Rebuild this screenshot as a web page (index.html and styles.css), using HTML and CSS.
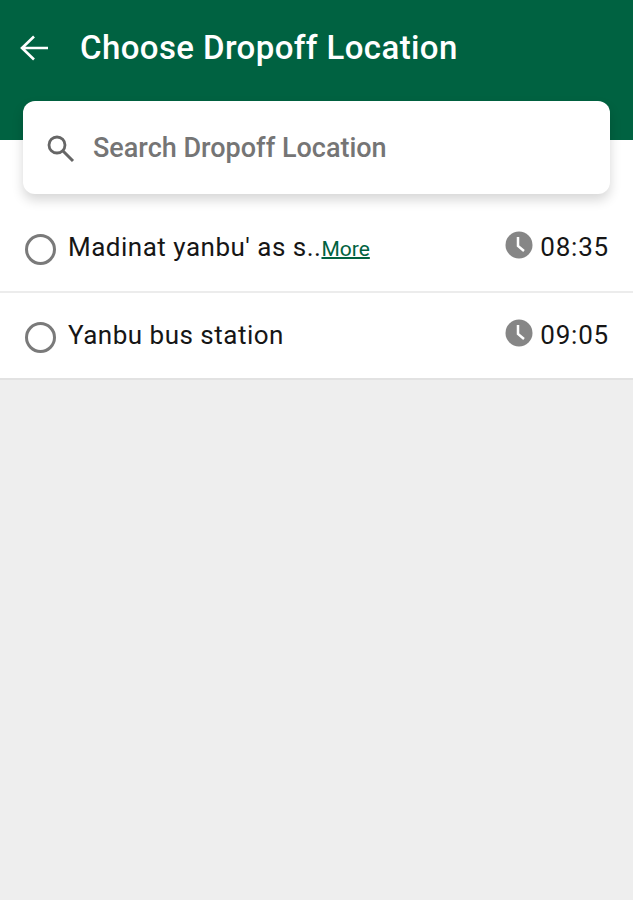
FILE: index.html
```html
<!DOCTYPE html>
<html lang="en">
<head>
    <meta charset="UTF-8">
    <meta name="viewport" content="width=device-width, initial-scale=1.0">
    <title>Choose Dropoff Location</title>
    <link rel="stylesheet" href="styles.css">
</head>
<body>
    <header class="header">
        <svg class="back-icon" width="32" height="32" viewBox="0 0 32 32">
            <path d="M30 16H4M16 4.500L4 16l12 11.500" fill="none" stroke="#fff" stroke-width="2.600"/>
        </svg>
        <h1 class="title">Choose Dropoff Location</h1>
    </header>

    <div class="search-wrap">
        <div class="search-box">
            <svg class="search-icon" width="30" height="30" viewBox="0 0 30 30">
                <circle cx="12" cy="12" r="8" fill="none" stroke="#666" stroke-width="2.800"/>
                <path d="M18 18l10 10" fill="none" stroke="#666" stroke-width="3"/>
            </svg>
            <span class="search-text">Search Dropoff Location</span>
        </div>
    </div>

    <div class="list">
        <div class="row row-first">
            <span class="radio"></span>
            <span class="name">Madinat yanbu' as s..</span><a class="more">More</a>
            <span class="time">
                <svg class="clock" width="28" height="28" viewBox="0 0 28 28">
                    <circle cx="14" cy="14" r="13.500" fill="#868686"/>
                    <path d="M13 6v9l6 5" fill="none" stroke="#fff" stroke-width="2.500"/>
                </svg>
                08:35
            </span>
        </div>
        <div class="row row-last">
            <span class="radio"></span>
            <span class="name">Yanbu bus station</span>
            <span class="time">
                <svg class="clock" width="28" height="28" viewBox="0 0 28 28">
                    <circle cx="14" cy="14" r="13.500" fill="#868686"/>
                    <path d="M13 6v9l6 5" fill="none" stroke="#fff" stroke-width="2.500"/>
                </svg>
                09:05
            </span>
        </div>
    </div>
</body>
</html>
```

FILE: styles.css
```css
body {
    margin: 0;
    height: 900px;
    background-color: #eeeeee;
    font-family: 'Roboto', sans-serif;
    color: #161616;
    overflow: hidden;
}

.header {
    display: flex;
    align-items: flex-start;
    height: 140px;
    box-sizing: border-box;
    padding: 32px 0 0 18px;
    background-color: #006241;
}

.back-icon {
    margin-right: 30px;
}

.title {
    margin: 0;
    color: #fff;
    font-size: 33px;
    font-weight: 500;
    line-height: 32px;
    letter-spacing: 0.4px;
}

.search-wrap {
    height: 54px;
    padding: 0 23px;
    background-color: #fff;
}

.search-box {
    display: flex;
    align-items: center;
    position: relative;
    top: -39px;
    height: 93px;
    padding-left: 22px;
    background-color: #fff;
    border-radius: 12px;
    box-shadow: 0 6px 12px rgba(0, 0, 0, 0.16);
}

.search-icon {
    margin-right: 18px;
}

.search-text {
    color: #757575;
    font-size: 27px;
    font-weight: 500;
}

.row {
    display: flex;
    align-items: center;
    box-sizing: border-box;
    padding: 0 24px 0 25px;
    background-color: #fff;
}

.row-first {
    height: 99px;
    padding-top: 8px;
    border-bottom: 2px solid #ececec;
}

.row-last {
    height: 87px;
    padding-bottom: 2px;
    border-bottom: 2px solid #e2e2e2;
}

.radio {
    width: 31px;
    height: 31px;
    box-sizing: border-box;
    margin: 5px 12px 0 0;
    border: 3px solid #7a7a7a;
    border-radius: 50%;
}

.name {
    font-size: 26px;
    letter-spacing: 0.5px;
}

.more {
    margin-top: 5px;
    color: #006241;
    font-size: 21px;
    text-decoration: underline;
    text-decoration-thickness: 2px;
}

.time {
    display: flex;
    align-items: center;
    margin-left: auto;
    font-size: 26px;
    letter-spacing: 0.8px;
}

.clock {
    margin: 0 7px 3px 0;
}
```
